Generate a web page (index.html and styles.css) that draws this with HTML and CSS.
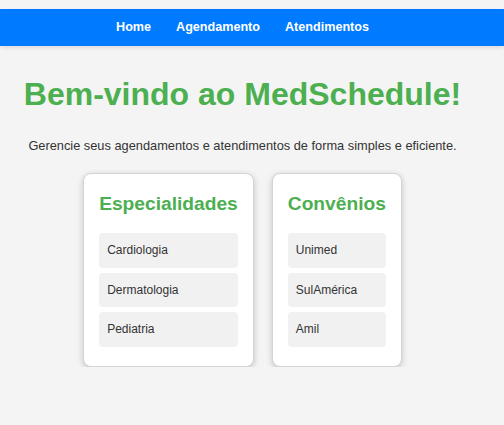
FILE: index.html
```html
<!DOCTYPE html>
<html lang="pt-BR">
<head>
<meta charset="utf-8">
<title>MedSchedule</title>
<link rel="stylesheet" href="styles.css">
</head>
<body>
  <nav class="navbar">
    <a class="nav-link" href="#">Home</a>
    <a class="nav-link" href="#">Agendamento</a>
    <a class="nav-link" href="#">Atendimentos</a>
  </nav>
  <main class="main">
    <h1 class="title">Bem-vindo ao MedSchedule!</h1>
    <p class="lead">Gerencie seus agendamentos e atendimentos de forma simples e eficiente.</p>
    <div class="cards">
      <section class="card">
        <h2 class="card-title">Especialidades</h2>
        <ul class="list">
          <li class="list-item">Cardiologia</li>
          <li class="list-item">Dermatologia</li>
          <li class="list-item">Pediatria</li>
        </ul>
      </section>
      <section class="card">
        <h2 class="card-title">Convênios</h2>
        <ul class="list">
          <li class="list-item">Unimed</li>
          <li class="list-item">SulAmérica</li>
          <li class="list-item">Amil</li>
        </ul>
      </section>
    </div>
  </main>
</body>
</html>
```
FILE: styles.css
```css
html, body {
  margin: 0;
  padding: 0;
}
body {
  background: #f4f4f4;
  font-family: "Liberation Sans", Arial, sans-serif;
  color: #333;
  padding-top: 9px;
}
.navbar {
  background: #007bff;
  height: 37px;
  display: flex;
  justify-content: center;
  align-items: center;
  gap: 25px;
  padding-right: 19px;
  box-shadow: 0 2px 4px rgba(0, 0, 0, 0.1);
}
.nav-link {
  color: #fff;
  text-decoration: none;
  font-weight: bold;
  font-size: 12.6px;
  line-height: 15px;
  padding-bottom: 1px;
}
.main {
  padding: 30px 19px 0 0;
  display: flex;
  flex-direction: column;
  align-items: center;
}
.title {
  margin: 0;
  font-size: 32px;
  line-height: 37px;
  font-weight: bold;
  color: #4caf50;
}
.lead {
  margin: 25px 0 0;
  font-size: 12.8px;
  line-height: 15px;
}
.cards {
  margin-top: 20px;
  display: flex;
  gap: 18px;
  align-items: flex-start;
}
.card {
  background: #fff;
  border: 1px solid #d4d4d4;
  border-radius: 8px;
  padding: 19px 15px;
  box-shadow: 0 2px 6px rgba(0, 0, 0, 0.2);
}
.card-title {
  margin: 0 0 18px;
  font-size: 19.2px;
  line-height: 22px;
  font-weight: bold;
  color: #4caf50;
  white-space: nowrap;
}
.list {
  list-style: none;
  margin: 0;
  padding: 0;
  display: flex;
  flex-direction: column;
  gap: 5px;
}
.list-item {
  background: #f1f1f1;
  border-radius: 4px;
  padding: 10px 8px;
  font-size: 12px;
  line-height: 14.5px;
  color: #333;
}
```
